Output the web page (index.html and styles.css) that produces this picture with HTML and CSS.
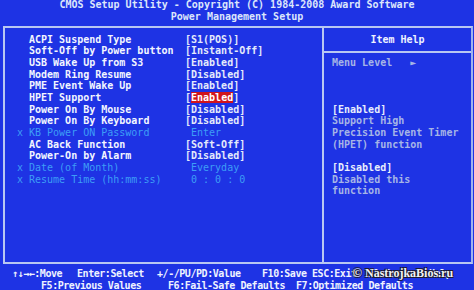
FILE: index.html
```html
<!DOCTYPE html>
<html>
<head>
<meta charset="utf-8">
<link rel="stylesheet" href="styles.css">
</head>
<body>
<div class="screen">
  <header class="title">
    <div class="tl">CMOS Setup Utility - Copyright (C) 1984-2008 Award Software</div>
    <div class="tl">Power Management Setup</div>
  </header>
  <main class="box">
    <section class="settings">
      <div class="row"><span class="mark"></span><span class="label">ACPI Suspend Type</span><span class="val">[S1(POS)]</span></div>
      <div class="row"><span class="mark"></span><span class="label">Soft-Off by Power button</span><span class="val">[Instant-Off]</span></div>
      <div class="row"><span class="mark"></span><span class="label">USB Wake Up from S3</span><span class="val">[Enabled]</span></div>
      <div class="row"><span class="mark"></span><span class="label">Modem Ring Resume</span><span class="val">[Disabled]</span></div>
      <div class="row"><span class="mark"></span><span class="label">PME Event Wake Up</span><span class="val">[Enabled]</span></div>
      <div class="row"><span class="mark"></span><span class="label">HPET Support</span><span class="val">[<span class="sel">Enabled</span>]</span></div>
      <div class="row"><span class="mark"></span><span class="label">Power On By Mouse</span><span class="val">[Disabled]</span></div>
      <div class="row"><span class="mark"></span><span class="label">Power On By Keyboard</span><span class="val">[Disabled]</span></div>
      <div class="row off"><span class="mark">x</span><span class="label">KB Power ON Password</span><span class="val"> Enter</span></div>
      <div class="row"><span class="mark"></span><span class="label">AC Back Function</span><span class="val">[Soft-Off]</span></div>
      <div class="row"><span class="mark"></span><span class="label">Power-On by Alarm</span><span class="val">[Disabled]</span></div>
      <div class="row off"><span class="mark">x</span><span class="label">Date (of Month)</span><span class="val"> Everyday</span></div>
      <div class="row off"><span class="mark">x</span><span class="label">Resume Time (hh:mm:ss)</span><span class="val"> 0 : 0 : 0</span></div>
    </section>
    <aside class="help">
      <div class="help-head">Item Help</div>
      <div class="help-body">
        <div class="hl">Menu Level   ►</div>
        <div class="hl"> </div>
        <div class="hl"> </div>
        <div class="hl"> </div>
        <div class="hl bright">[Enabled]</div>
        <div class="hl">Support High</div>
        <div class="hl">Precision Event Timer</div>
        <div class="hl">(HPET) function</div>
        <div class="hl"> </div>
        <div class="hl bright">[Disabled]</div>
        <div class="hl">Disabled this</div>
        <div class="hl">function</div>
      </div>
    </aside>
  </main>
  <footer class="keys">
    <div class="kline k1"><span class="key w-move">↑↓→←:Move</span><span class="key w-sel">Enter:Select</span><span class="key w-val">+/-/PU/PD:Value</span><span class="key w-save">F10:Save</span><span class="key">ESC:Exit  F1:General Help</span></div>
    <div class="kline k2"><span class="key w-f5">F5:Previous Values</span><span class="key w-f6">F6:Fail-Safe Defaults</span><span class="key">F7:Optimized Defaults</span></div>
  </footer>
  <div class="watermark">© NastrojkaBios.ru</div>
</div>
</body>
</html>
```

FILE: styles.css
```css
html, body {
  margin: 0;
  padding: 0;
  background: #1e33e4;
}

.screen {
  position: relative;
  width: 474px;
  height: 290px;
  overflow: hidden;
  background: #1e33e4;
  font-family: "DejaVu Sans Mono", "Liberation Mono", monospace;
  font-weight: bold;
  font-size: 10px;
  line-height: 11.7px;
  color: #eef2ff;
}

.tl, .mark, .label, .val, .help-head, .hl, .key {
  white-space: pre;
}

.title {
  margin-top: -1px;
  height: 27px;
  text-align: center;
  color: #dce6fb;
}

.box {
  display: grid;
  grid-template-columns: 319px 1fr;
  height: 234px;
  margin: 0 1px 0 3px;
  border: 2px solid #b9c7f2;
  border-right-color: #9fb3ef;
}

.settings {
  border-right: 2px solid #b9c7f2;
  padding: 5.5px 0 0 12px;
}

.row {
  display: flex;
  height: 11.7px;
}

.mark {
  width: 12px;
  flex: none;
}

.label {
  width: 156px;
  flex: none;
  color: #f3f6ff;
}

.val {
  color: #e4eafb;
}

.row.off .mark,
.row.off .label,
.row.off .val {
  color: #3d9ef6;
  font-weight: normal;
}

.sel {
  background: #d0141c;
  color: #ffffff;
}

.help-head {
  padding-top: 5.5px;
  padding-bottom: 5.3px;
  text-align: center;
  border-bottom: 2px solid #b9c7f2;
  color: #eef2ff;
}

.help-body {
  padding: 4.4px 0 0 8px;
}

.hl {
  height: 11.7px;
  color: #a6b5e6;
}

.hl.bright {
  color: #e8eefc;
}

.keys {
  padding: 4px 0 0 0;
  color: #eef2ff;
  letter-spacing: -0.45px;
}

.kline {
  display: flex;
  height: 11.7px;
}

.k1 {
  padding-left: 12px;
}

.k2 {
  padding-left: 41px;
}

.key {
  flex: none;
}

.w-move { width: 65px; }
.w-sel { width: 80px; }
.w-val { width: 105px; }
.w-save { width: 50px; }
.w-f5 { width: 127px; }
.w-f6 { width: 128px; }

.watermark {
  position: absolute;
  left: 353px;
  top: 266px;
  font-family: "Liberation Serif", "DejaVu Serif", serif;
  font-weight: bold;
  font-size: 12px;
  line-height: 14px;
  color: #f2f2f2;
  text-shadow: 1px 1px 0 #1a1a30, -1px -1px 0 #1a1a30, 1px -1px 0 #1a1a30, -1px 1px 0 #1a1a30;
}
```
